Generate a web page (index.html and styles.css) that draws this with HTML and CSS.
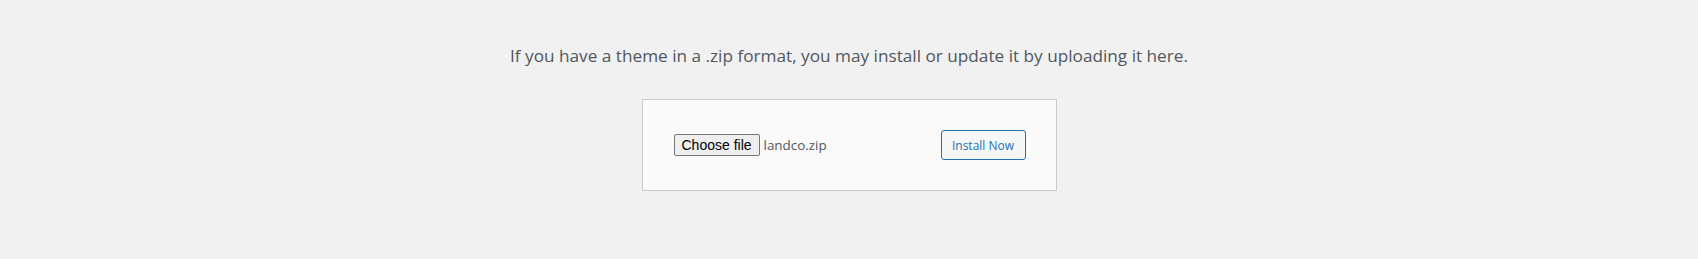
FILE: index.html
```html
<!DOCTYPE html>
<html lang="en">
<head>
    <meta charset="UTF-8">
    <title>Upload Theme</title>
    <link rel="stylesheet" href="styles.css">
</head>
<body>
    <div class="upload-theme">
        <p class="install-help">If you have a theme in a .zip format, you may install or update it by uploading it here.</p>

        <!-- Formulário de upload -->
        <form class="upload-form">
            <div class="file-field">
                <button type="button" class="file-button">Choose file</button>
                <span class="file-name">landco.zip</span>
            </div>
            <button type="button" class="install-button">Install Now</button>
        </form>
    </div>
</body>
</html>
```

FILE: styles.css
```css
body {
    margin: 0;
    padding: 0;
    background-color: #f1f1f1;
    font-family: 'Open Sans', 'Noto Sans', sans-serif;
    color: #50575e;
}
.upload-theme {
    display: flex;
    flex-direction: column;
    align-items: center;
    padding-top: 44px;
}
.install-help {
    margin: 0;
    font-size: 17.2px;
    line-height: 24px;
    color: #50575e;
}
.upload-form {
    margin-top: 31px;
    width: 353px;
    padding: 30px;
    background: #fafafa;
    border: 1px solid #c9cacc;
    display: flex;
    align-items: center;
    justify-content: space-between;
}
.file-field {
    display: flex;
    align-items: center;
    gap: 4px;
    padding-left: 1px;
}
.file-button {
    font-family: 'Liberation Sans', Arial, sans-serif;
    font-size: 14px;
    height: 22px;
    padding: 0 7px;
    border: 1px solid #767676;
    border-radius: 2px;
    background: #efefef;
    color: #000;
}
.file-name {
    font-size: 13.4px;
    color: #50575e;
}
.install-button {
    font-family: 'Open Sans', 'Noto Sans', sans-serif;
    font-size: 12px;
    height: 30px;
    width: 85px;
    padding: 0 8px;
    border: 1px solid #2271b1;
    border-radius: 3px;
    background: #f6f7f7;
    color: #2271b1;
}
```
